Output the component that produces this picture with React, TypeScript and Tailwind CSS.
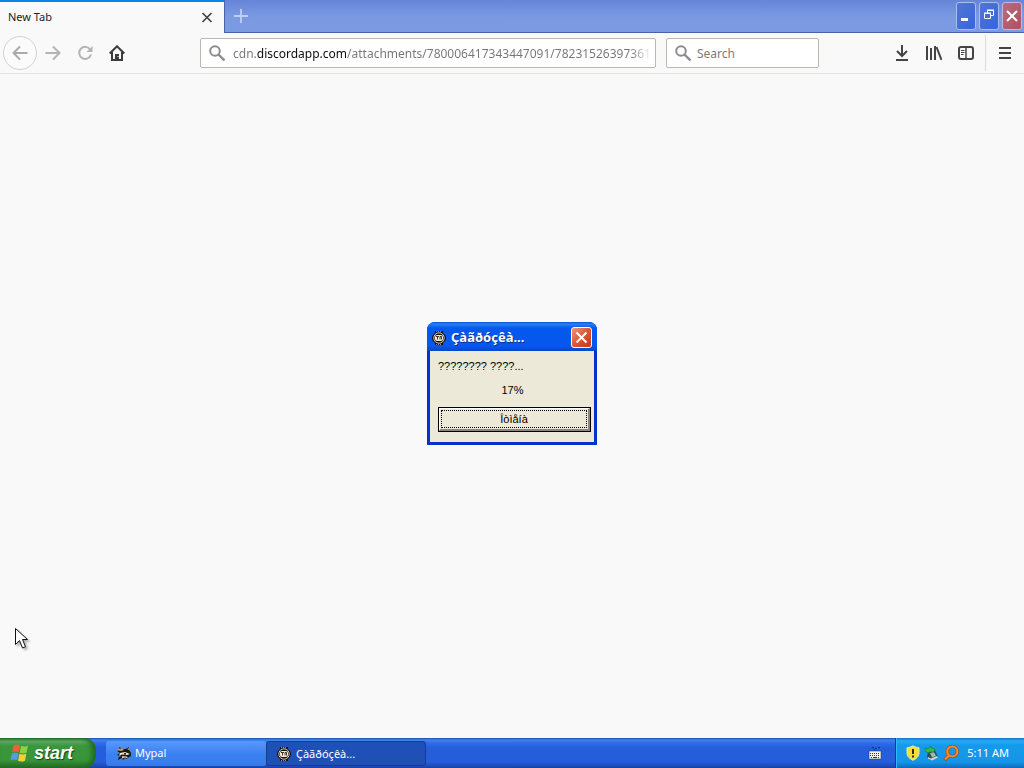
import type { ReactNode } from "react";

const url =
  "cdn.discordapp.com/attachments/780006417343447091/782315263973617685/setup.exe";

function SearchGlyph() {
  return (
    <svg className="size-4 shrink-0" viewBox="0 0 16 16" fill="none" stroke="#8d8d8d" aria-hidden="true">
      <circle cx="6" cy="6" r="4.8" strokeWidth="2" />
      <path d="M9.5 9.5l6 6" strokeWidth="2.4" />
    </svg>
  );
}

function BadgeGlyph() {
  return (
    <svg className="size-4 shrink-0" viewBox="0 0 16 16" aria-hidden="true">
      <path d="M4 1h8v2l2 2 1 2v2l-1 2-2 2v2H4v-2l-2-2-1-2V7l1-2 2-2z" fill="#16120e" />
      <path d="M5 1.500h1M7 1.500h1M9 1.500h1M5 14.500h1M7 14.500h1M9 14.500h1" stroke="#8b93b8" />
      <circle cx="8" cy="8" r="5.200" fill="none" stroke="#f0dccb" strokeWidth=".9" />
      <rect x="4" y="5" width="8" height="6" rx="2" fill="#f4ead8" />
      <path d="M5 6.500h3M6.500 6.500v3M9 9.500v-3h1.500v3" fill="none" stroke="#30201a" strokeWidth=".9" />
    </svg>
  );
}

function ToolButton({ label, children }: { label: string; children: ReactNode }) {
  return (
    <button type="button" aria-label={label} className="flex size-8 items-center justify-center">
      {children}
    </button>
  );
}

function TitleBar() {
  return (
    <header className="flex h-[33px] bg-linear-to-b from-[#6785d8] via-[#7b99e2] to-[#7b9be0]">
      <div className="flex w-56 items-center justify-between border-t-2 border-[#0a84e8] bg-[#f9f9fa] pr-[9px] pl-2">
        <span className="text-[11px] text-[#222]">New Tab</span>
        <button type="button" aria-label="Close tab" className="flex size-4 items-center justify-center">
          <svg className="size-3.5" viewBox="0 0 14 14" stroke="#444" strokeWidth="1.7" aria-hidden="true">
            <path d="M2.5 2l9 9M11.5 2l-9 9" />
          </svg>
        </button>
      </div>
      <div className="flex flex-1 items-start justify-between border-b border-l border-[#4a62a8] pl-2">
        <button type="button" aria-label="New tab" className="mt-2 flex size-4 items-center justify-center">
          <svg className="size-4" viewBox="0 0 16 16" stroke="#bdd0fb" strokeWidth="1.8" aria-hidden="true">
            <path d="M8 1v14M1 8h14" />
          </svg>
        </button>
        <div className="flex gap-[3px] pt-[2px] pr-0.5">
          <button type="button" aria-label="Minimize" className="h-7 w-5 rounded-[3px] border border-[#a9bdf0] bg-linear-to-br from-[#5375d3] to-[#3464de]">
            <svg className="size-full" viewBox="0 0 18 26" aria-hidden="true">
              <path d="M4 15h7v3H4z" fill="#fff" />
            </svg>
          </button>
          <button type="button" aria-label="Restore" className="h-7 w-5 rounded-[3px] border border-[#a9bdf0] bg-linear-to-br from-[#5375d3] to-[#3464de]">
            <svg className="size-full" viewBox="0 0 18 26" fill="none" stroke="#fff" aria-hidden="true">
              <path d="M4.5 10.5h6v5h-6zM4 10h7M7.5 10V7.500h6v5H11M7 7h7" />
            </svg>
          </button>
          <button type="button" aria-label="Close window" className="h-7 w-5 rounded-[3px] border border-[#c9b5dc] bg-linear-to-br from-[#b66c80] to-[#b24f60]">
            <svg className="size-full" viewBox="0 0 18 26" stroke="#fff" strokeWidth="2" aria-hidden="true">
              <path d="M4 8l10 10M14 8L4 18" />
            </svg>
          </button>
        </div>
      </div>
    </header>
  );
}

function Toolbar() {
  return (
    <nav className="flex h-[41px] items-center border-b border-[#e1e1e2] bg-[#f9f9fa] pl-[3px]">
      <button type="button" aria-label="Back" className="flex size-[34px] items-center justify-center rounded-full border border-[#d2d2d2] bg-[#fbfbfb]">
        <svg className="size-4" viewBox="0 0 16 16" fill="none" stroke="#aaa" strokeWidth="2" aria-hidden="true">
          <path d="M15.500 8H1.500M8 1.500L1.500 8 8 14.500" />
        </svg>
      </button>
      <ToolButton label="Forward">
        <svg className="size-4" viewBox="0 0 16 16" fill="none" stroke="#b4b4b4" strokeWidth="2" aria-hidden="true">
          <path d="M.5 8h14M8 1.500L14.500 8 8 14.500" />
        </svg>
      </ToolButton>
      <ToolButton label="Reload">
        <svg className="size-4" viewBox="0 0 16 16" fill="none" stroke="#b4b4b4" strokeWidth="2" aria-hidden="true">
          <path d="M13.200 4.500A6 6 0 1 0 14 9.500" />
          <path d="M15.500 1v6h-6z" fill="#b4b4b4" stroke="none" />
        </svg>
      </ToolButton>
      <ToolButton label="Home">
        <svg className="size-4" viewBox="0 0 16 16" fill="none" stroke="#3c3c3c" strokeWidth="2" aria-hidden="true">
          <path d="M.7 8.500L8 1.300l7.300 7.200" />
          <path d="M3 7v8h10V7" />
          <path d="M6 15V9h4v6z" fill="#3c3c3c" stroke="none" />
          <path d="M8.500 11h1v1h-1z" fill="#fff" stroke="none" />
        </svg>
      </ToolButton>
      <label className="ml-[67px] flex h-[30px] min-w-0 flex-1 items-center gap-2 rounded-[2px] border border-[#b9b9b4] bg-white pr-0.5 pl-2">
        <SearchGlyph />
        <input
          type="text"
          aria-label="Address"
          defaultValue={url}
          className="min-w-0 flex-1 bg-[linear-gradient(90deg,#757575_24px,#0c0c0c_24px,#0c0c0c_114px,#757575_114px,#757575_calc(100%-24px),transparent)] bg-clip-text pt-px text-xs text-transparent outline-none"
        />
      </label>
      <label className="ml-2.5 flex h-[30px] w-[153px] items-center gap-1.5 rounded-[2px] border border-[#b9b9b4] bg-white px-2">
        <SearchGlyph />
        <input type="text" aria-label="Search" placeholder="Search" className="min-w-0 flex-1 pt-px text-xs outline-none placeholder:text-[#7c7c7c]" />
      </label>
      <div className="ml-[67px] flex">
        <ToolButton label="Downloads">
          <svg className="size-4" viewBox="0 0 16 16" fill="none" stroke="#444" strokeWidth="2" aria-hidden="true">
            <path d="M8 0v11M3 6l5 5 5-5M2 15h12" />
          </svg>
        </ToolButton>
        <ToolButton label="Library">
          <svg className="size-4" viewBox="0 0 16 16" fill="none" stroke="#444" strokeWidth="2" aria-hidden="true">
            <path d="M1 1v14M5 3v12M9 1v14M10.500 2L15.500 15" />
          </svg>
        </ToolButton>
        <ToolButton label="Sidebars">
          <svg className="size-4" viewBox="0 0 16 16" fill="none" stroke="#444" aria-hidden="true">
            <rect x="1" y="2" width="14" height="12" rx="2" strokeWidth="2" />
            <path d="M8 2v12" strokeWidth="1.500" />
            <path d="M3 5.500h3.500M3 7.500h3.500M3 9.500h2.500" />
          </svg>
        </ToolButton>
      </div>
      <div className="ml-[3px] flex h-9 items-center border-l border-[#dcdcdd] pr-[3px] pl-[3px]">
        <ToolButton label="Menu">
          <svg className="size-4" viewBox="0 0 16 16" stroke="#444" strokeWidth="2" aria-hidden="true">
            <path d="M2 3h12M2 8h12M2 13h12" />
          </svg>
        </ToolButton>
      </div>
    </nav>
  );
}

function ProgressDialog() {
  return (
    <section role="dialog" aria-label="Çàãðóçêà..." className="w-[170px] rounded-t-lg bg-[#0831c9] px-[3px] pb-[3px]">
      <div className="-mx-[3px] flex h-[29px] items-center rounded-t-lg bg-[linear-gradient(#0a4fd8_0px,#2a80f5_2px,#0558ed_6px,#0558ed_24px,#0448c8_29px)] pt-0.5 pr-[5px] pl-1">
        <BadgeGlyph />
        <h1 className="ml-1 flex-1 text-[13px] font-bold text-white [text-shadow:1px_1px_#0a2f8c]">Çàãðóçêà...</h1>
        <button type="button" aria-label="Close dialog" className="size-[21px] rounded-[3px] border border-white bg-linear-to-br from-[#ee9578] via-[#dc5432] to-[#c43a12]">
          <svg className="size-full" viewBox="0 0 19 19" stroke="#fff" strokeWidth="2" aria-hidden="true">
            <path d="M4.500 4.500l10 10M14.500 4.500l-10 10" />
          </svg>
        </button>
      </div>
      <div className="bg-[#ece9d8] pt-[7px] pr-[3px] pb-2.5 pl-2 font-['Liberation_Sans',sans-serif] text-[11px] leading-4 text-black">
        <p>???????? ????...</p>
        <p className="mt-2 pr-1 text-center">17%</p>
        <button type="button" className="mt-[9px] block h-[25px] w-full border border-black p-0">
          <span className="block h-full border-t border-r-2 border-b-2 border-l border-t-white border-r-[#8b887b] border-b-[#8b887b] border-l-white p-px">
            <span className="flex h-full items-center justify-center border border-dotted border-black">Îòìåíà</span>
          </span>
        </button>
      </div>
    </section>
  );
}

function Taskbar() {
  return (
    <footer className="flex h-[30px] bg-[linear-gradient(#1f4fa8_0px,#3d86ed_2px,#2f6ce8_5px,#245edb_10px,#245edb_24px,#1941a5_30px)] text-[11px] text-white">
      <button type="button" className="flex w-24 items-center gap-1 rounded-r-xl bg-[linear-gradient(#2b6e2d_0px,#62ab62_3px,#3a963a_8px,#389538_22px,#256a27_30px)] pl-2.5 shadow-[inset_-4px_0_5px_#1f6a23]">
        <svg className="size-5 shrink-0" viewBox="0 0 20 20" aria-hidden="true">
          <path d="M3.500 2.500Q6.500.5 10 2.200L8.700 9.200Q5.300 7.700 2 9.500z" fill="#ec6135" />
          <path d="M11 2.700Q14.500 4.200 18 2.500L16.600 9.600Q13 11.300 9.700 9.700z" fill="#8bd045" />
          <path d="M1.800 10.600Q5 8.900 8.400 10.300L7 17.300Q3.500 15.800.5 17.600z" fill="#5599f0" />
          <path d="M9.400 10.800Q12.800 12.300 16.300 10.700L15 17.700Q11.400 19.400 8 17.800z" fill="#f8cd3a" />
        </svg>
        <span className="font-['Liberation_Sans',sans-serif] text-lg leading-5 font-bold italic [text-shadow:1px_1px_1px_#174519]">start</span>
      </button>
      <div className="ml-2.5 flex pt-[3px] pb-0.5">
        <button type="button" className="flex w-40 items-center gap-[3px] rounded-[3px] bg-linear-to-b from-[#5a98fa] via-[#3c81f3] to-[#377bea] pl-2.5">
          <svg className="size-4 shrink-0" viewBox="0 0 16 16" aria-hidden="true">
            <path d="M1 5l3-1-1-3 4 2 3 0 3-2 0 3 2 3 0 3-2 1-2 2-2-1-2 2-1-2-4 2 1-4-2-1 3-2z" fill="#171713" />
            <path d="M1 4l4 1 3-1-2-2zM11 3l2-1v2z" fill="#c6a243" />
            <path d="M4 7l5-1 5 2-3 1-5-.5-3 1z" fill="#eee6cb" />
            <path d="M8 7h2v1.500H8z" fill="#171713" />
            <path d="M6 10l5 .5 1 2-3-1-3 1z" fill="#d9c5a0" />
            <path d="M2 10l3-1-1 2z" fill="#bd8130" />
          </svg>
          <span>Mypal</span>
        </button>
        <button type="button" className="flex w-40 items-center gap-1 rounded-[3px] border border-[#173b91] bg-[#1e50b8] pt-px pl-[9px]">
          <BadgeGlyph />
          <span>Çàãðóçêà...</span>
        </button>
      </div>
      <button type="button" aria-label="Keyboard layout" className="mr-3 ml-auto">
        <svg className="size-4" viewBox="0 0 16 16" aria-hidden="true">
          <path d="M5 2.500h2M8 3.500h2M11 2.500h2M7 4.500h1" fill="none" stroke="#153069" />
          <path d="M2 6h12v8H2z" fill="#f5f2e8" stroke="#17336c" strokeWidth=".5" />
          <path d="M3 8.500h10M3 10.500h10" stroke="#333" strokeDasharray="1 1" />
          <path d="M4 12.500h1M6 12.500h4M11 12.500h1" stroke="#333" />
        </svg>
      </button>
      <div className="flex items-center gap-[3px] border-l border-[#103c8c] bg-[linear-gradient(#1674ca_0px,#27a9f3_3px,#159aeb_7px,#1595e8_24px,#0e68bb_30px)] pr-[15px] pl-[9px] shadow-[inset_1px_0_#32baf8]">
        <svg className="size-4" viewBox="0 0 16 16" aria-hidden="true">
          <path d="M8 .8C10 2 12 2.500 14 2.800v5c0 4-3 6-6 7.500-3-1.500-6-3.500-6-7.500v-5C4 2.500 6 2 8 .8z" fill="#f6df35" stroke="#ede9b1" />
          <path d="M7 4h2v5H7zM7 10.500h2v2H7z" fill="#332b17" />
        </svg>
        <svg className="size-4" viewBox="0 0 16 16" aria-hidden="true">
          <path d="M4 6l7-1 3 7-7 3-4-3z" fill="#2c4e50" />
          <path d="M6 8l4-1 2 4-4 1.500z" fill="#9eb9bd" />
          <path d="M4 12l3 1.500 6-2.500 1 1.500-6 3-4-2z" fill="#d2d6cc" />
          <path d="M1 3l3 1 3-3v2l4 1-1 3-4 0-2 1-3-2z" fill="#36bd3d" stroke="#17752c" strokeWidth=".6" />
        </svg>
        <svg className="size-4" viewBox="0 0 16 16" fill="none" aria-hidden="true">
          <path d="M6.500 10L1.500 15" stroke="#a9420d" strokeWidth="3.500" />
          <circle cx="9.300" cy="6.500" r="5" stroke="#a9420d" strokeWidth="3.200" />
          <circle cx="9.300" cy="6.500" r="5" stroke="#f58a2f" strokeWidth="2.200" />
          <path d="M6.500 10L2 14.500" stroke="#f58a2f" strokeWidth="2.300" />
        </svg>
        <time className="ml-[5px]">5:11 AM</time>
      </div>
    </footer>
  );
}

export default function App() {
  return (
    <div className="relative flex min-h-screen flex-col bg-[#f9f9f9] font-['Noto_Sans',sans-serif]">
      <TitleBar />
      <Toolbar />
      <main className="flex-1" />
      <Taskbar />
      <div className="pointer-events-none absolute inset-0 grid place-items-center pb-px">
        <div className="pointer-events-auto">
          <ProgressDialog />
        </div>
      </div>
      <svg className="pointer-events-none absolute bottom-[117px] left-[14px] h-6 w-4 drop-shadow-[2px_2px_1px_rgba(0,0,0,0.3)]" viewBox="0 0 16 24" aria-hidden="true">
        <path d="M1.500 1.500v16l4-4 3 7.500 3-1.300-3-7.200h5z" fill="#fff" stroke="#111" />
      </svg>
    </div>
  );
}
